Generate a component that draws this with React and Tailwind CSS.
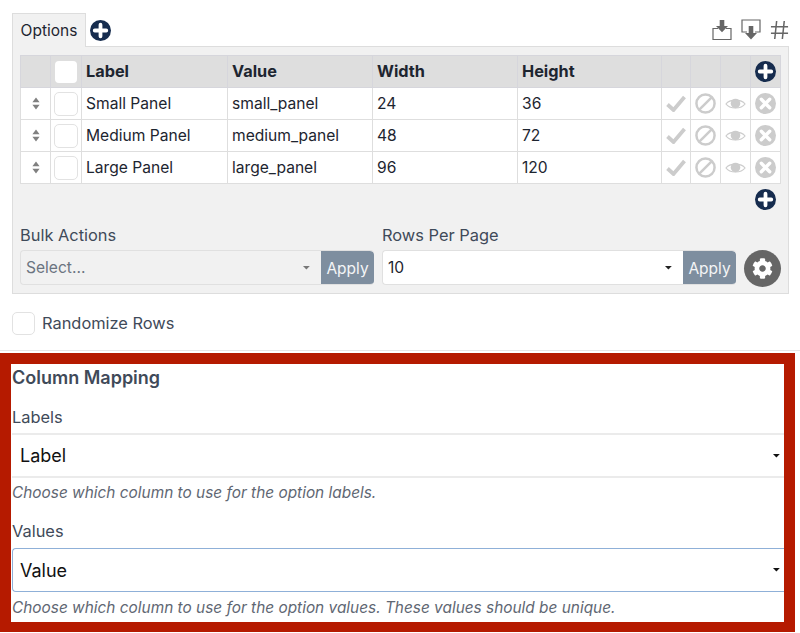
import React from "react";
import { FaCog } from "react-icons/fa";

function Plus({ size = "w-[21px] h-[21px]" }) {
  return (
    <span className={`${size} rounded-full bg-[#162c4e] flex items-center justify-center shrink-0`}>
      <svg viewBox="0 0 20 20" className="w-full h-full">
        <path d="M10 4.5v11M4.5 10h11" stroke="#fff" strokeWidth="3.6" strokeLinecap="round" fill="none" />
      </svg>
    </span>
  );
}

function Sort() {
  return (
    <svg viewBox="0 0 10 16" className="w-[8px] h-[13px] text-[#808080] mx-auto block" fill="currentColor">
      <path d="M5 0.5 L9.5 6.5 H0.5 Z M5 15.5 L0.5 9.5 H9.5 Z" />
    </svg>
  );
}

function Caret({ className }) {
  return (
    <svg viewBox="0 0 10 5" className={className} fill="currentColor">
      <path d="M0 0h8.5L4.25 4.5z" />
    </svg>
  );
}

function RowIcons() {
  return (
    <>
      <td className="border border-[#dedede] p-0 text-center">
        <svg viewBox="0 0 20 17" className="w-[20px] h-[17px] mx-auto block">
          <path d="M1.5 9.5 L7.5 15 L18.5 2" stroke="#cccccc" strokeWidth="3.8" fill="none" />
        </svg>
      </td>
      <td className="border border-[#dedede] p-0 text-center">
        <svg viewBox="0 0 22 22" className="w-[21px] h-[21px] mx-auto block">
          <circle cx="11" cy="11" r="9.5" stroke="#cccccc" strokeWidth="2.6" fill="none" />
          <path d="M4.8 17.2 L17.2 4.8" stroke="#cccccc" strokeWidth="2.6" />
        </svg>
      </td>
      <td className="border border-[#dedede] p-0 text-center">
        <svg viewBox="0 0 22 14" className="w-[21px] h-[14px] mx-auto block">
          <path d="M1 7 C5 1.5 17 1.5 21 7 C17 12.5 5 12.5 1 7 Z" stroke="#cccccc" strokeWidth="1.2" fill="none" />
          <circle cx="11" cy="6.4" r="5" fill="#cccccc" />
        </svg>
      </td>
      <td className="border border-[#dedede] p-0 text-center">
        <span className="w-[21px] h-[21px] rounded-full bg-[#cccccc] flex items-center justify-center mx-auto">
          <svg viewBox="0 0 20 20" className="w-full h-full">
            <path d="M6 6 L14 14 M14 6 L6 14" stroke="#fff" strokeWidth="3.2" strokeLinecap="round" />
          </svg>
        </span>
      </td>
    </>
  );
}

const rows = [
  ["Small Panel", "small_panel", "24", "36"],
  ["Medium Panel", "medium_panel", "48", "72"],
  ["Large Panel", "large_panel", "96", "120"],
];

function Apply() {
  return (
    <span className="w-[53px] h-[35px] bg-[#7e8e9f] text-[#f4f5f6] text-[15.5px] rounded-r-[4px] flex items-center justify-center shrink-0">
      Apply
    </span>
  );
}

export default function App() {
  return (
    <div className="w-[800px] h-[633px] overflow-hidden bg-white font-['Inter',sans-serif] text-[16.4px] text-[#3f4a59]">
      <div className="px-3 pt-[13px] h-[337px] border-b border-[#e6e6e6] box-content">
        <div className="flex items-center h-[33px] relative z-10">
          <div className="w-[74px] h-[34px] pt-[2px] bg-[#f1f1f1] border border-[#dddddd] border-b-0 text-[#1d2530] text-[15.5px] flex items-center justify-center">
            Options
          </div>
          <span className="ml-[4px] mt-[1px]"><Plus /></span>
          <div className="ml-auto flex items-center gap-[9px] text-[#666] mr-[-1px]">
            <svg viewBox="0 0 20 22" className="w-[20px] h-[22px]" fill="none" stroke="#666">
              <path d="M6 9.5H1v11h18v-11h-5" strokeWidth="1.2" />
              <path d="M7.7 1h4.6v6H16l-6 6.2L4 7h3.7z" fill="#666" stroke="none" />
            </svg>
            <svg viewBox="0 0 20 22" className="w-[20px] h-[22px]" fill="none" stroke="#666">
              <path d="M6 13H1V1h18v12h-5" strokeWidth="1.2" />
              <path d="M7.7 7h4.6v7H16l-6 6.5L4 14h3.7z" fill="#666" stroke="none" />
            </svg>
            <svg viewBox="0 0 20 22" className="w-[19px] h-[22px]" fill="none" stroke="#666" strokeWidth="1.6">
              <path d="M7 1.5 5 20.5M15 1.5l-2 19M1 7.5h18M1 14.5h18" />
            </svg>
          </div>
        </div>
        <div className="w-[777px] h-[248px] bg-[#f1f1f1] border border-[#dddddd] px-[7px] pt-[8px]">
          <table className="w-[760px] table-fixed border-collapse bg-white text-[#1d2530] text-[15.6px]">
            <colgroup>
              <col className="w-[30px]" />
              <col className="w-[31px]" />
              <col className="w-[146px]" />
              <col className="w-[145px]" />
              <col className="w-[145px]" />
              <col className="w-[144px]" />
              <col className="w-[29px]" />
              <col className="w-[30px]" />
              <col className="w-[30px]" />
              <col className="w-[30px]" />
            </colgroup>
            <thead>
              <tr className="h-[32px] bg-[#dedede] font-bold text-left text-[16.3px]">
                <th className="border border-[#d6d6dc] p-0" />
                <th className="border border-[#d6d6dc] p-0">
                  <div className="w-[22px] h-[22px] rounded-[4px] bg-white mx-auto" />
                </th>
                <th className="border border-[#d6d6dc] px-[4px] py-0">Label</th>
                <th className="border border-[#d6d6dc] px-[4px] py-0">Value</th>
                <th className="border border-[#d6d6dc] px-[4px] py-0">Width</th>
                <th className="border border-[#d6d6dc] px-[4px] py-0">Height</th>
                <th className="border border-[#d6d6dc] p-0" />
                <th className="border border-[#d6d6dc] p-0" />
                <th className="border border-[#d6d6dc] p-0" />
                <th className="border border-[#d6d6dc] p-0">
                  <span className="flex justify-center"><Plus /></span>
                </th>
              </tr>
            </thead>
            <tbody>
              {rows.map((r) => (
                <tr key={r[0]} className="h-[32px]">
                  <td className="border border-[#dedede] p-0"><Sort /></td>
                  <td className="border border-[#dedede] p-0">
                    <div className="w-[24px] h-[24px] rounded-[5px] border border-[#e2e2e2] mx-auto" />
                  </td>
                  {r.map((c) => (
                    <td key={c} className="border border-[#dedede] px-[4px] py-0">{c}</td>
                  ))}
                  <RowIcons />
                </tr>
              ))}
            </tbody>
          </table>
          <div className="flex justify-end pr-[5px] pt-[5px] h-[29px]">
            <Plus />
          </div>
          <div className="flex mt-[10px] items-end">
            <div className="w-[354px] mr-[8px]">
              <div className="mb-[3px] leading-[24px]">Bulk Actions</div>
              <div className="flex w-[354px] h-[35px] border border-r-0 border-[#e0e0e0] rounded-[4px] overflow-hidden">
                <div className="flex-1 flex items-center justify-between px-[5px] pr-[10px] text-[#6b7480] text-[15.6px]">
                  <span>Select...</span>
                  <Caret className="w-[8px] h-[4px] text-[#777]" />
                </div>
                <Apply />
              </div>
            </div>
            <div className="w-[354px]">
              <div className="mb-[3px] leading-[24px]">Rows Per Page</div>
              <div className="flex w-[354px] h-[35px] border border-r-0 border-[#e0e0e0] rounded-[4px] overflow-hidden bg-white">
                <div className="flex-1 flex items-center justify-between px-[5px] pr-[10px] text-[#1d2530] text-[15.6px]">
                  <span>10</span>
                  <Caret className="w-[8px] h-[4px] text-[#222]" />
                </div>
                <Apply />
              </div>
            </div>
            <span className="ml-[8px] mb-[-2px] w-[37px] h-[37px] rounded-full bg-[#666666] text-white flex items-center justify-center shrink-0">
              <FaCog className="w-[21px] h-[21px]" />
            </span>
          </div>
        </div>
        <div className="flex items-center mt-[17px] gap-[7px]">
          <div className="w-[23px] h-[23px] rounded-[5px] border border-[#e2e2e2]" />
          <span>Randomize Rows</span>
        </div>
      </div>
      <div className="w-[795px] h-[279px] mt-[2px] border-[11px] border-b-[10px] border-[#b51a00] bg-white overflow-hidden pl-px">
        <div className="font-semibold text-[18px] mt-[2px] leading-[24px]">Column Mapping</div>
        <div className="mt-[15px] leading-[24px]">Labels</div>
        <div className="mt-[4px] h-[45px] border-y-2 border-[#ebebeb] flex items-center justify-between pl-[8px] pr-[3px] text-[18px] text-[#111]">
          <span>Label</span>
          <Caret className="w-[8px] h-[4px] text-[#111]" />
        </div>
        <div className="italic text-[#5f6773] mt-[4px] leading-[22px] text-[15.4px]">Choose which column to use for the option labels.</div>
        <div className="mt-[15px] leading-[24px]">Values</div>
        <div className="mt-[5px] h-[44px] border border-r-0 border-[#8fb0d8] rounded-l-[4px] flex items-center justify-between pl-[7px] pr-[3px] text-[18px] text-[#111]">
          <span>Value</span>
          <Caret className="w-[8px] h-[4px] text-[#111]" />
        </div>
        <div className="italic text-[#5f6773] mt-[5px] leading-[22px] text-[15.4px]">Choose which column to use for the option values. These values should be unique.</div>
      </div>
    </div>
  );
}
